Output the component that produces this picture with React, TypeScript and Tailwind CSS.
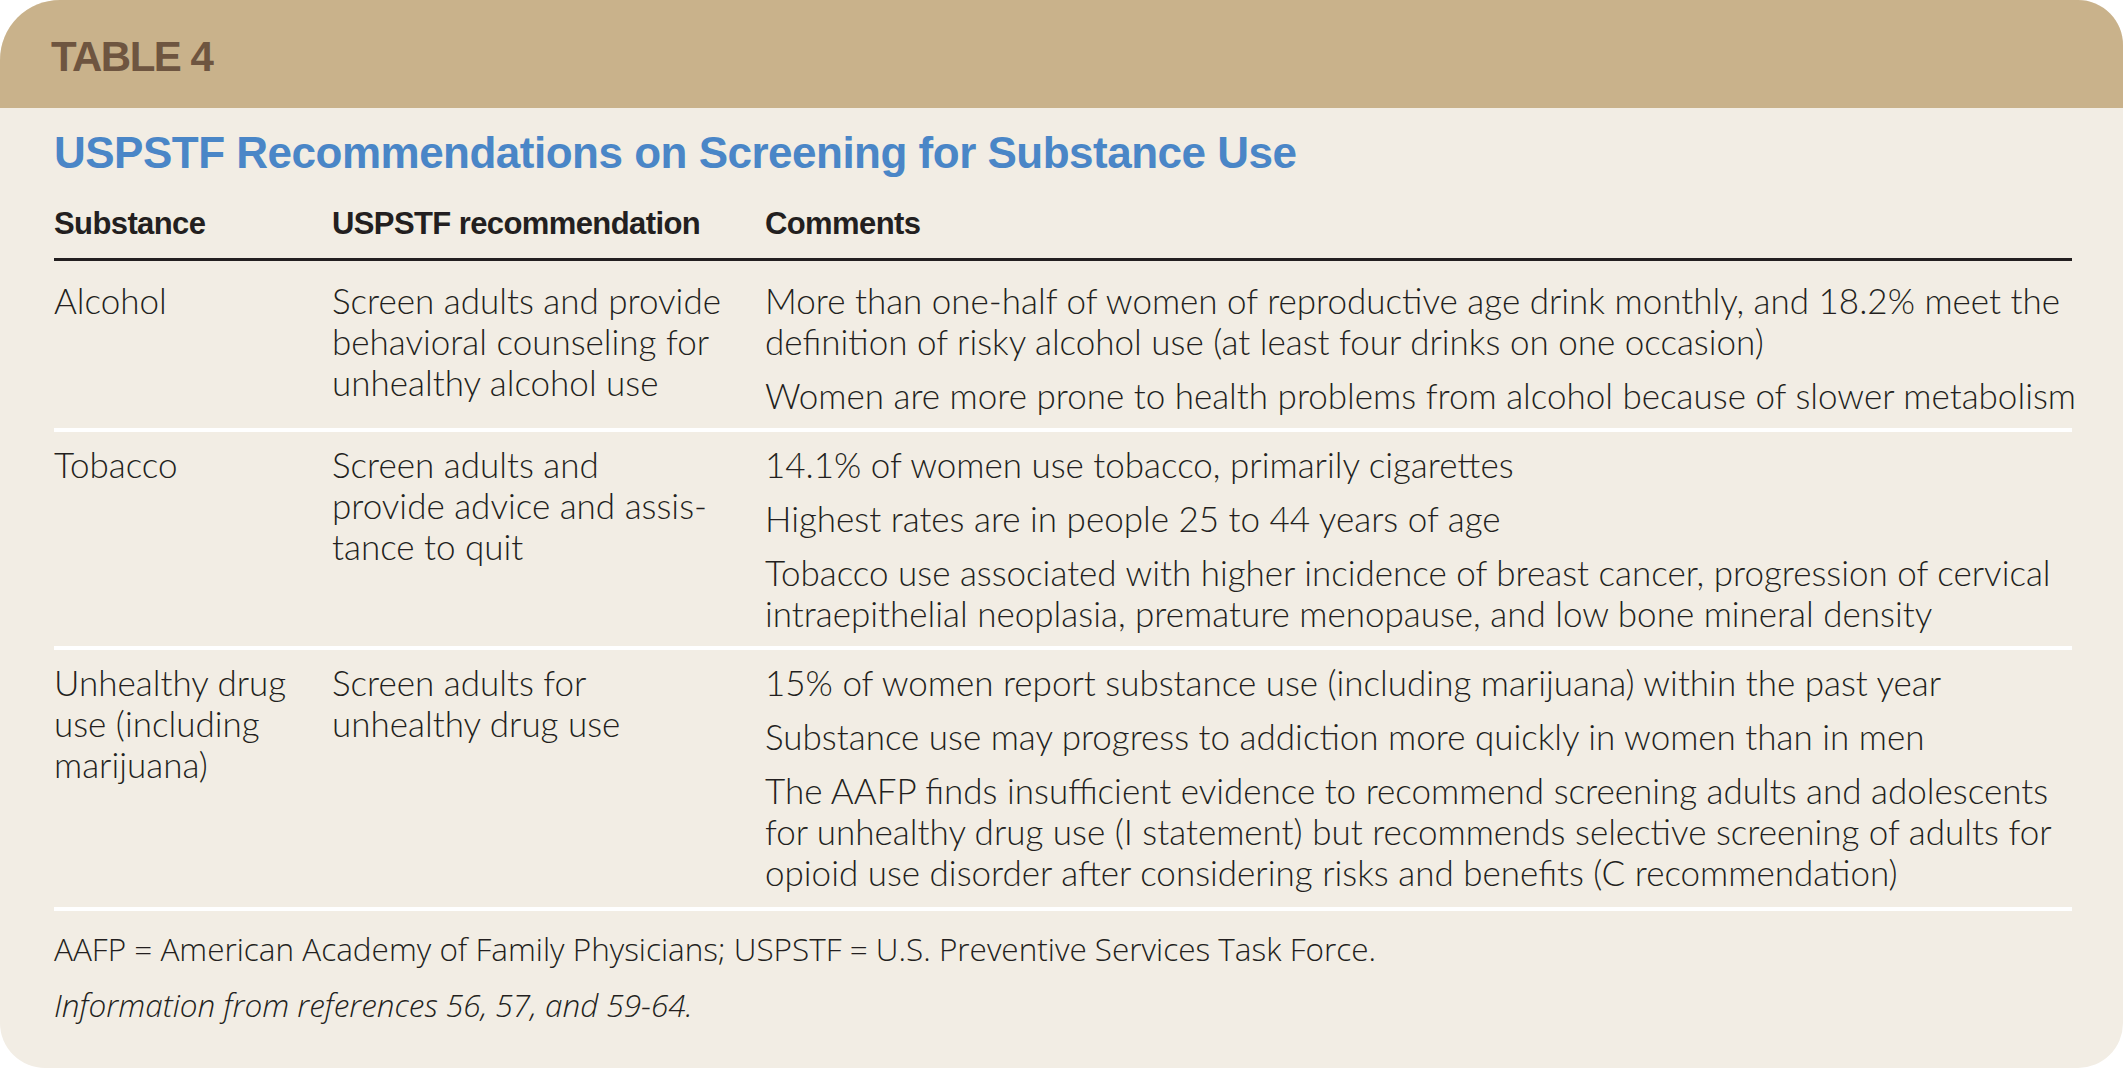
import React from "react"

const body = "font-['Lato','Liberation_Sans',sans-serif] font-light text-[35px] leading-[41px] text-[#231f20]"

type Row = {
  substance: string[]
  rec: string[]
  comments: string[][]
}

const rows: Row[] = [
  {
    substance: ["Alcohol"],
    rec: ["Screen adults and provide", "behavioral counseling for", "unhealthy alcohol use"],
    comments: [
      [
        "More than one-half of women of reproductive age drink monthly, and 18.2% meet the",
        "definition of risky alcohol use (at least four drinks on one occasion)",
      ],
      ["Women are more prone to health problems from alcohol because of slower metabolism"],
    ],
  },
  {
    substance: ["Tobacco"],
    rec: ["Screen adults and", "provide advice and assis-", "tance to quit"],
    comments: [
      ["14.1% of women use tobacco, primarily cigarettes"],
      ["Highest rates are in people 25 to 44 years of age"],
      [
        "Tobacco use associated with higher incidence of breast cancer, progression of cervical",
        "intraepithelial neoplasia, premature menopause, and low bone mineral density",
      ],
    ],
  },
  {
    substance: ["Unhealthy drug", "use (including", "marijuana)"],
    rec: ["Screen adults for", "unhealthy drug use"],
    comments: [
      ["15% of women report substance use (including marijuana) within the past year"],
      ["Substance use may progress to addiction more quickly in women than in men"],
      [
        "The AAFP finds insufficient evidence to recommend screening adults and adolescents",
        "for unhealthy drug use (I statement) but recommends selective screening of adults for",
        "opioid use disorder after considering risks and benefits (C recommendation)",
      ],
    ],
  },
]

function Lines({ lines }: { lines: string[] }) {
  return (
    <div className="whitespace-nowrap">
      {lines.map((l, i) => (
        <div key={i}>{l}</div>
      ))}
    </div>
  )
}

export default function App() {
  return (
    <div className="w-[2123px] h-[1070px] bg-white">
      <div className="h-[1068px] overflow-hidden rounded-tl-[60px] rounded-tr-[45px] rounded-b-[45px] bg-[#f2ede4]">
        <div className="flex h-[108px] items-center bg-[#c9b28b] px-[51px] pt-[4px]">
          <h2 className="font-['Liberation_Sans',sans-serif] text-[42px] font-bold tracking-[-1.5px] text-[#6e5540]">
            TABLE 4
          </h2>
        </div>

        <div className="pl-[54px] pr-[51px]">
          <h1 className="mt-[20px] font-['Liberation_Sans',sans-serif] text-[44px] font-bold leading-[50px] tracking-[-0.5px] text-[#4a86c7]">
            USPSTF Recommendations on Screening for Substance Use
          </h1>

          <div className="mt-[25px] grid grid-cols-[278px_433px_1fr] border-b-[3px] border-[#231f20] pb-[14px] font-['Liberation_Sans',sans-serif] text-[31px] font-bold leading-[41px] tracking-[-0.6px] text-[#231f20]">
            <div>Substance</div>
            <div>USPSTF recommendation</div>
            <div>Comments</div>
          </div>

          {rows.map((r, i) => (
            <div
              key={i}
              className={`grid grid-cols-[278px_433px_1fr] border-b-4 border-white ${body} ${i === 0 ? "pt-[19px]" : "pt-[12px]"} ${i === 2 ? "pb-[14px]" : "pb-[12px]"}`}
            >
              <Lines lines={r.substance} />
              <Lines lines={r.rec} />
              <div className="flex flex-col gap-[13px]">
                {r.comments.map((c, j) => (
                  <Lines key={j} lines={c} />
                ))}
              </div>
            </div>
          ))}

          <div className="pt-[19px] font-['Open_Sans','Liberation_Sans',sans-serif] font-light text-[31.5px] leading-[37px] text-[#231f20]">
            <p>AAFP = American Academy of Family Physicians; USPSTF = U.S. Preventive Services Task Force.</p>
            <p className="mt-[19px] italic">Information from references 56, 57, and 59-64.</p>
          </div>
        </div>
      </div>
    </div>
  )
}
